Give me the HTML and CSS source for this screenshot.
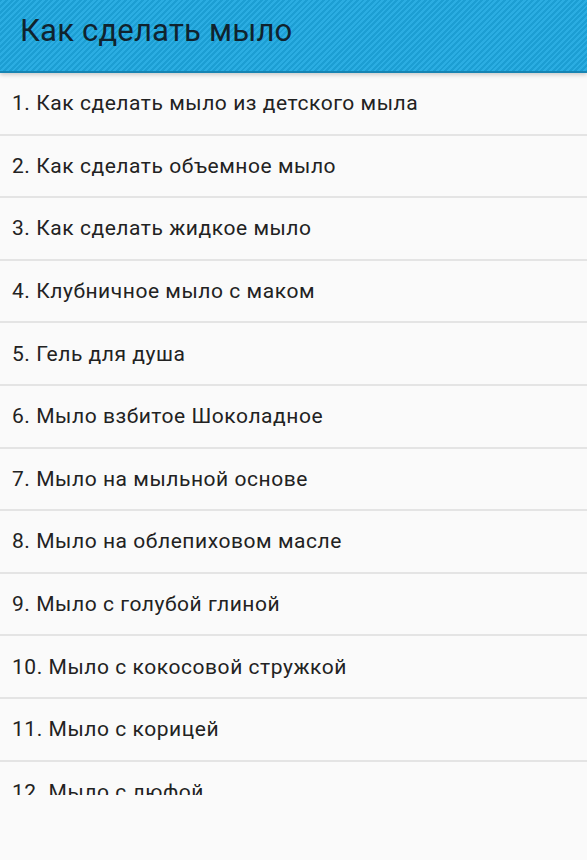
FILE: index.html
```html
<!DOCTYPE html>
<html lang="ru">
<head>
    <meta charset="UTF-8">
    <meta name="viewport" content="width=device-width, initial-scale=1.0">
    <title>Как сделать мыло</title>
    <link rel="stylesheet" href="styles.css">
</head>
<body>
    <div class="action-bar">
        <h1 class="title">Как сделать мыло</h1>
    </div>

    <ul class="recipe-list">
        <li class="recipe-item">1. Как сделать мыло из детского мыла</li>
        <li class="recipe-item">2. Как сделать объемное мыло</li>
        <li class="recipe-item">3. Как сделать жидкое мыло</li>
        <li class="recipe-item">4. Клубничное мыло с маком</li>
        <li class="recipe-item">5. Гель для душа</li>
        <li class="recipe-item">6. Мыло взбитое Шоколадное</li>
        <li class="recipe-item">7. Мыло на мыльной основе</li>
        <li class="recipe-item">8. Мыло на облепиховом масле</li>
        <li class="recipe-item">9. Мыло с голубой глиной</li>
        <li class="recipe-item">10. Мыло с кокосовой стружкой</li>
        <li class="recipe-item">11. Мыло с корицей</li>
        <li class="recipe-item">12. Мыло с люфой</li>
    </ul>
</body>
</html>
```

FILE: styles.css
```css
body {
    font-family: Roboto, "Noto Sans", sans-serif;
    background-color: #fafafa;
    margin: 0;
    padding: 0;
}
.action-bar {
    height: 71px;
    display: flex;
    align-items: center;
    padding-left: 20px;
    background-color: #22a6dc;
    background-image: repeating-linear-gradient(135deg, #1c9ed3 0, #1c9ed3 2px, #2bade2 2px, #2bade2 4px);
    border-bottom: 2px solid #1784b3;
    box-shadow: 0 2px 4px rgba(0, 0, 0, 0.18);
    position: relative;
    z-index: 1;
}
.title {
    margin: 0;
    margin-top: -10px;
    font-size: 31px;
    letter-spacing: 0.2px;
    font-weight: normal;
    color: #10232e;
}
.recipe-list {
    list-style: none;
    margin: 0;
    padding: 0;
    height: 722px;
    overflow: hidden;
}
.recipe-item {
    box-sizing: border-box;
    height: 62.6px;
    display: flex;
    align-items: center;
    padding-left: 12px;
    font-size: 21px;
    letter-spacing: 0.55px;
    color: #222;
    border-bottom: 2px solid #e4e4e4;
}
```
